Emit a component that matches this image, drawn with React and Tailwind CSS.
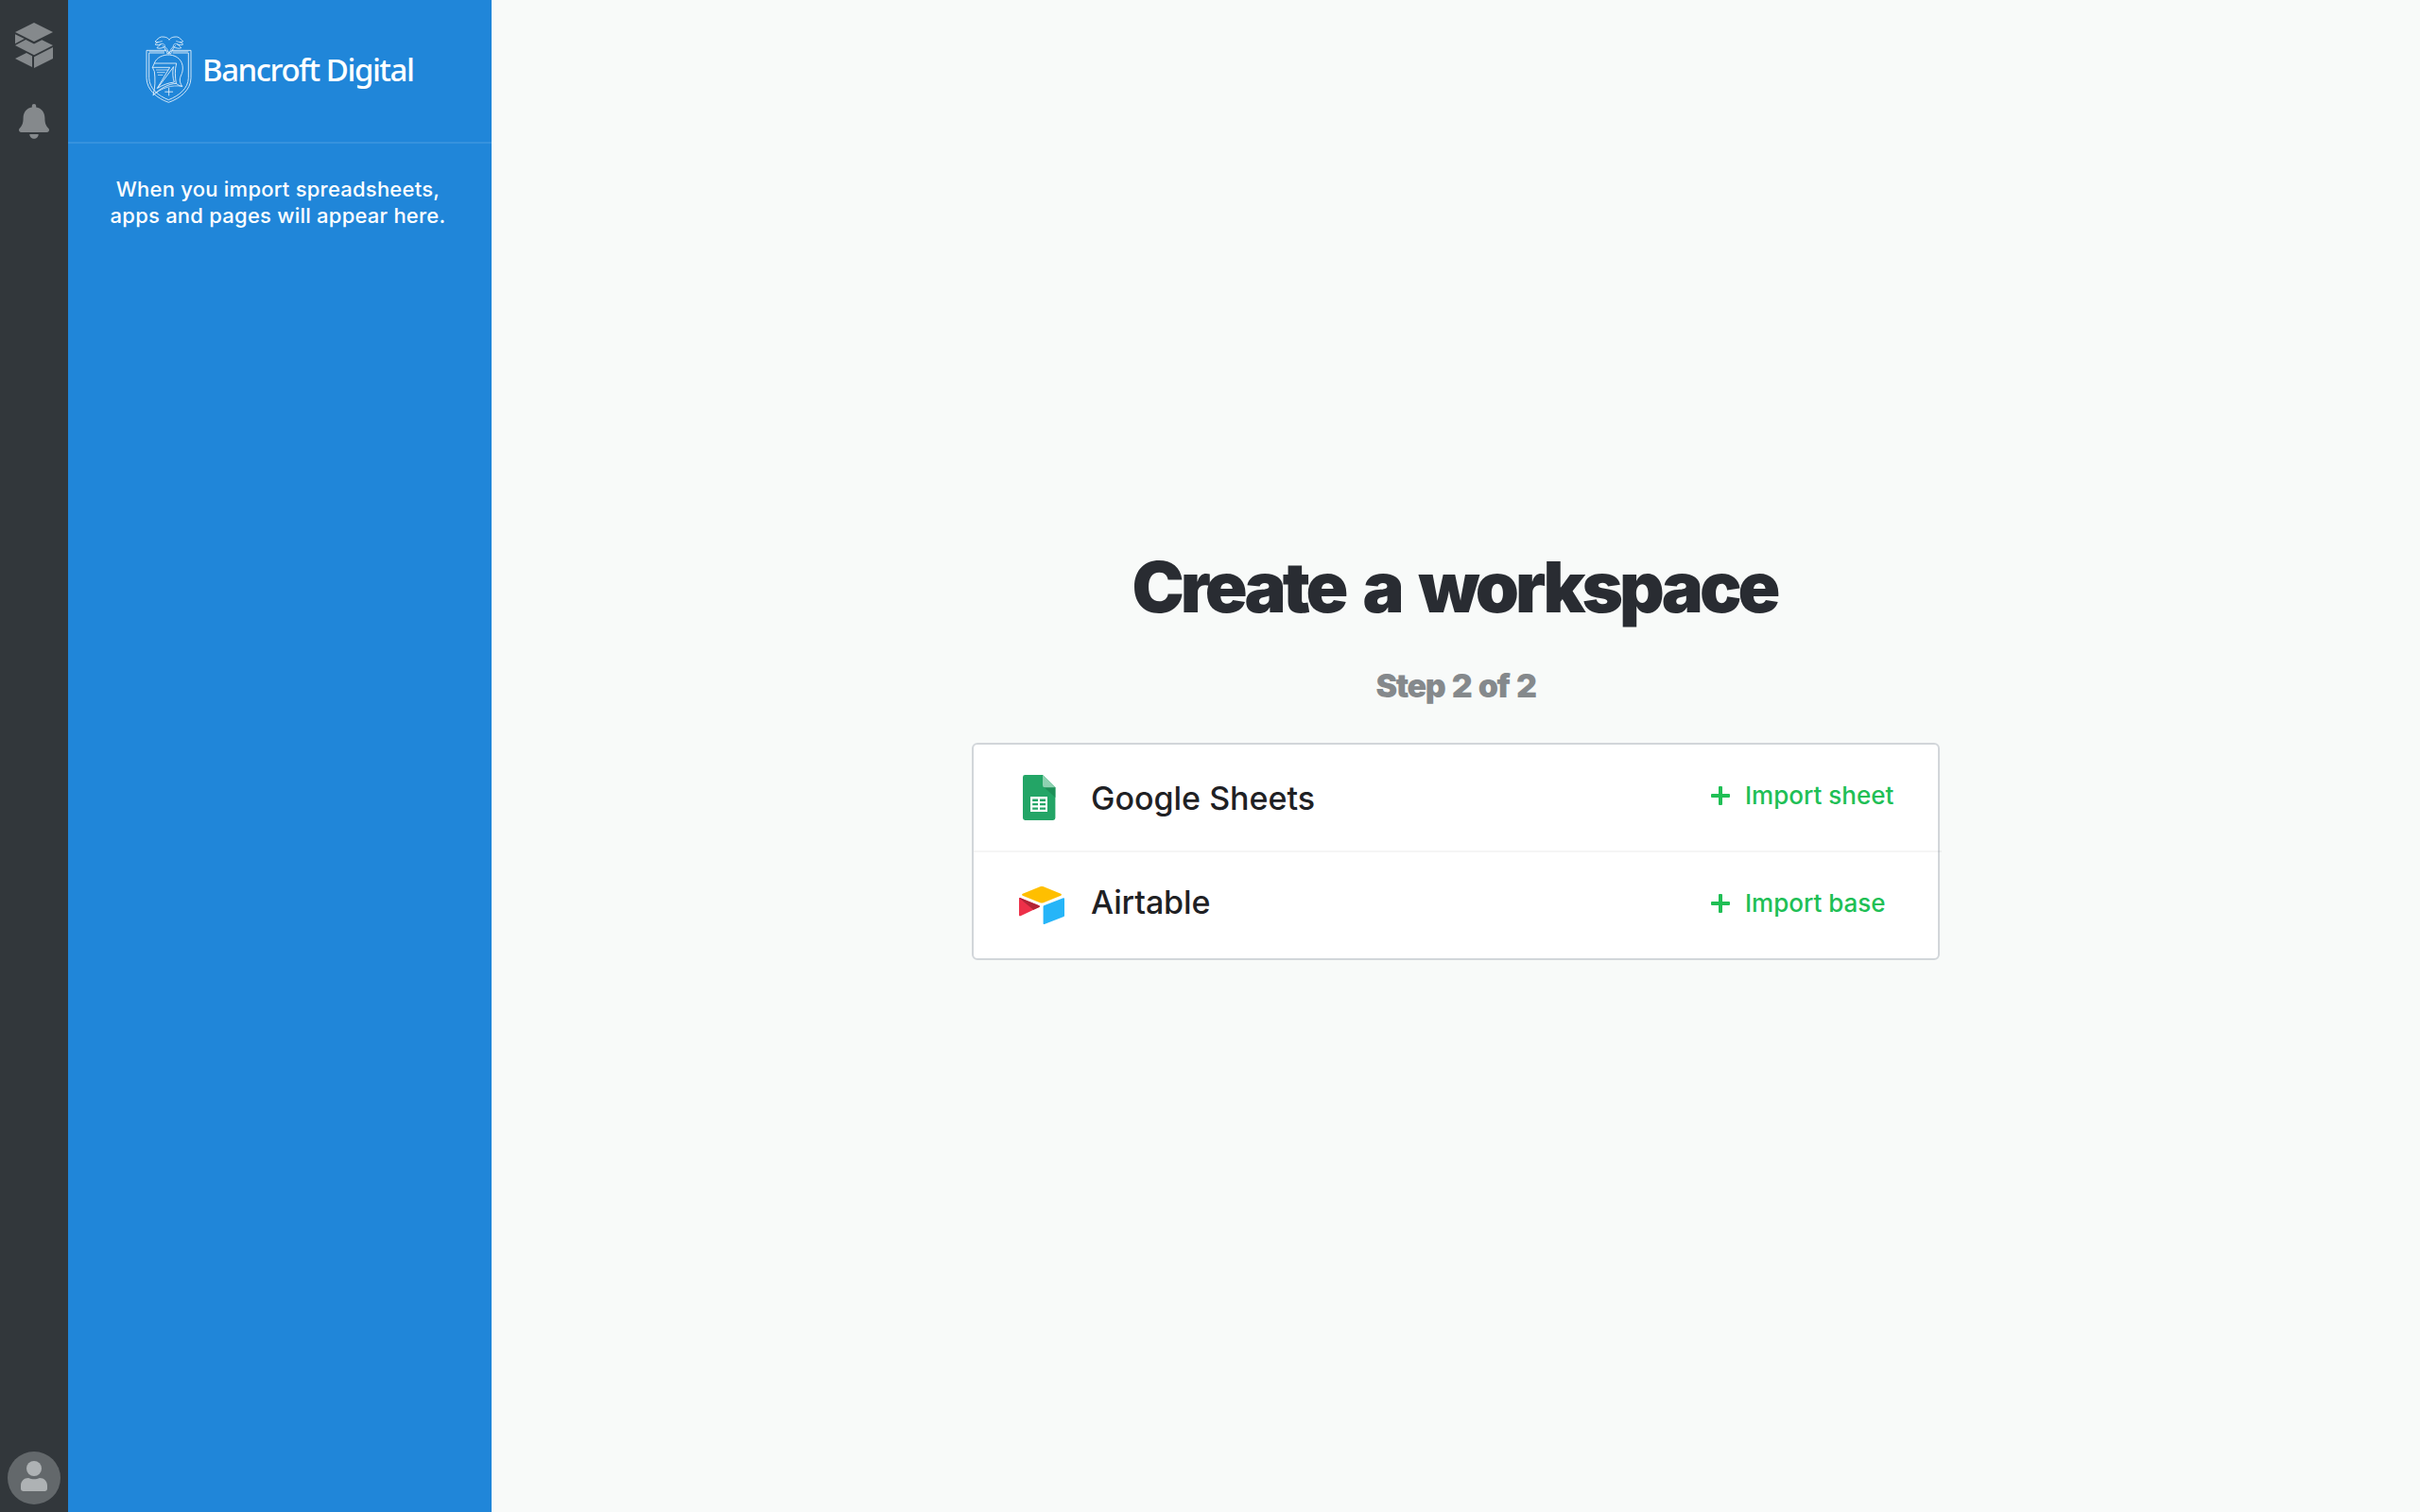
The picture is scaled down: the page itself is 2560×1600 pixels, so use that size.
import React from "react";

function StackIcon() {
  return (
    <svg className="block h-12 w-10" viewBox="0 0 40 48" fill="#85898c">
      <path d="M20 0 40 10 20 20 0 10Z" />
      <path d="M0 12.2 9.8 17 0 22.2Z" />
      <path d="M0 24 11.2 18 20 22.4 28.4 18.2 40 24 20 34.2Z" />
      <path d="M0 38 12 32 18 35.2V47Z" />
      <path d="M20 36.2 40 26V38L20 48Z" />
    </svg>
  );
}

function BellIcon() {
  return (
    <svg className="block h-[37px] w-8" viewBox="0 0 32 37" fill="#85898c">
      <path d="M16 0c1.3 0 2.2.9 2.2 2.2v1.3C24 4.500 27.400 9 27.400 14.800c0 6 1.300 8.200 3.800 10.900.5.500.8 1.100.8 1.900 0 1.300-1 2.400-2.400 2.400H2.400C1 30 0 28.900 0 27.600c0-.8.3-1.400.8-1.900 2.500-2.700 3.800-4.900 3.800-10.900C4.600 9 8 4.500 13.800 3.500V2.200C13.800.9 14.700 0 16 0Z" />
      <path d="M11.300 32h9.400c0 2.800-2.100 4.800-4.700 4.800s-4.700-2-4.700-4.800Z" />
    </svg>
  );
}

function Avatar() {
  return (
    <svg className="block size-14" viewBox="0 0 56 56">
      <circle cx="28" cy="28" r="28" fill="#63686b" />
      <circle cx="28" cy="18" r="8" fill="#aeb2b4" />
      <path d="M22 28c2 .9 4 1.200 6 1.200s4-.3 6-1.200c4.500 0 8 3.500 8 8v3.600a2.400 2.400 0 0 1-2.400 2.400H16.400a2.400 2.400 0 0 1-2.400-2.400V36c0-4.500 3.500-8 8-8Z" fill="#aeb2b4" />
    </svg>
  );
}

function Crest() {
  return (
    <svg className="block h-[71px] w-[49px]" viewBox="42 40 147 213" fill="none" stroke="#fff" strokeWidth="2.700" strokeLinejoin="round" strokeLinecap="round" opacity=".88">
      <path d="M104 86H45V174C46 212 78 238 115 251C152 238 185 212 186 174V86H126" />
      <path d="M101 94H53V174C54 207 82 230 115 243C148 230 177 207 178 174V94H129" />
      <path d="M54 90H101M129 90H177" strokeWidth="1.800" />
      <path d="M117 52C111 43 101 43 92 43C83 45 79 52 72 58C77 60 79 60 82 60C76 62 74 65 72 67C80 70 86 68 91 66C85 70 81 74 78 78C86 82 94 78 100 76M117 52C123 43 133 43 142 43C151 45 155 52 161 58C156 60 154 60 151 60C157 62 160 65 161 67C153 70 147 68 142 66C148 70 152 74 155 78C147 82 139 78 133 76" strokeWidth="2.600" />
      <path d="M82 60L94 57M151 60L140 57M91 66C98 62 104 67 103 74M142 66C135 62 129 67 130 74M96 71L101 76L111 96M137 71L132 76L122 96M103 74C110 78 112 86 117 97M130 74C123 78 121 86 116 97M104 84L122 97M129 84L111 97" strokeWidth="2.200" />
      <path d="M70 126C76 109 97 99 118 100C143 102 160 119 160 142C160 160 152 166 151 178C150 187 154 193 158 200C149 198 143 195 139 191" />
      <path d="M64 140L70 127H140C134 148 136 171 139 191C115 192 88 207 66 228C73 203 73 178 70 153L64 140H119L79 206" />
      <path d="M76 148H113M79 156H103M82 164H96" strokeWidth="2.200" />
      <path d="M130 139L80 206C97 195 115 189 133 187C128 173 127 156 130 139Z" />
      <path d="M66 228C91 206 124 194 158 200" strokeWidth="2.200" />
      <path d="M104 217.500H128M116 206V229" />
    </svg>
  );
}

function SheetsIcon() {
  return (
    <svg className="ml-1 block h-12 w-[35px]" viewBox="0 0 35 48">
      <path d="M2.400 0H21L34.400 13.200V45.600A2.400 2.400 0 0 1 32 48H2.400A2.400 2.400 0 0 1 0 45.600V2.400A2.400 2.400 0 0 1 2.400 0Z" fill="#23a566" />
      <path d="M22 12.400 34.400 24V13Z" fill="#1c8f57" />
      <path d="M21 0 34.400 13.200H23.200A2.200 2.200 0 0 1 21 11Z" fill="#8ed1b1" />
      <path d="M8 23H26V39H8ZM10.200 25.500V28H16V25.500ZM18 25.500V28H24V25.500ZM10.200 30V32.300H16V30ZM18 30V32.300H24V30ZM10.200 34.400V36.800H16V34.400ZM18 34.400V36.800H24V34.400Z" fill="#fff" fillRule="evenodd" />
    </svg>
  );
}

function AirtableIcon() {
  return (
    <svg className="block h-10 w-12" viewBox="0 0 48 40">
      <path d="M22.300.3a4.800 4.800 0 0 1 3.600 0L44.200 7.800c1 .4 1 1.600 0 2L25.800 17.200a4.800 4.800 0 0 1-3.600 0L3.800 9.800c-1-.4-1-1.600 0-2Z" fill="#ffbf00" />
      <path d="M25.600 21.300V39.200c0 .7.500 1 1.200.8L47.300 32.100c.5-.2.700-.5.700-1V13.100c0-.8-.5-1.100-1.200-.8L26.300 20.300c-.5.200-.7.500-.7 1Z" fill="#26b5f8" />
      <path d="M21.200 22.100 1.600 31.300C.8 31.700 0 31.300 0 30.600V13.200C0 12.200.8 11.900 1.500 12.200L21.200 20.200c.9.400.9 1.500 0 1.900Z" fill="#ed3049" />
      <path d="M.4 12.400C.7 12.100 1.100 12 1.500 12.200L21.200 20.200c.9.400.9 1.500 0 1.900L15.300 24.800Z" fill="#b22437" />
    </svg>
  );
}

function PlusIcon() {
  return (
    <svg className="block size-5" viewBox="0 0 20 20" fill="#20bf55">
      <path d="M9 0h2a1 1 0 0 1 1 1v7h7a1 1 0 0 1 1 1v2a1 1 0 0 1-1 1h-7v7a1 1 0 0 1-1 1H9a1 1 0 0 1-1-1v-7H1a1 1 0 0 1-1-1V9a1 1 0 0 1 1-1h7V1a1 1 0 0 1 1-1Z" />
    </svg>
  );
}

function ImportButton({ label }) {
  return (
    <button className="ml-auto flex w-60 items-center pb-1.5 text-[26px] leading-8 font-medium text-[#20bf55]">
      <span className="pt-0.5"><PlusIcon /></span>
      <span className="ml-4 pt-px whitespace-nowrap">{label}</span>
    </button>
  );
}

export default function App() {
  return (
    <div className="flex h-[1600px] w-[2560px] overflow-hidden bg-[#f8faf9] font-['Inter',sans-serif]">
      <nav className="flex w-[72px] flex-col items-center bg-[#32373b] pt-6 pb-2">
        <StackIcon />
        <div className="mt-[38px]"><BellIcon /></div>
        <div className="mt-auto"><Avatar /></div>
      </nav>

      <aside className="w-[448px] bg-[#2086d9] text-white">
        <header className="flex h-[152px] items-start border-b-2 border-[#3692dd] pt-[38px] pl-[82px]">
          <Crest />
          <span className="ml-[11px] pt-3 font-['Noto_Sans',sans-serif] text-[33px] leading-[48px] font-medium tracking-[-1.450px] whitespace-nowrap">Bancroft Digital</span>
        </header>
        <p className="mt-[34px] pr-1 text-center text-[22px] leading-[28px] font-medium tracking-[0.23px]">
          When you import spreadsheets,
          <br />
          apps and pages will appear here.
        </p>
      </aside>

      <main className="flex flex-1 flex-col items-center pt-[577px]">
        <h1 className="pr-[3px] text-[74px] leading-[89px] font-black tracking-[-3.900px] [word-spacing:8px] text-[#292c32]">Create a workspace</h1>
        <h2 className="mt-10 text-[34px] leading-10 font-black tracking-[-1.400px] [word-spacing:2px] text-[#85898c]">Step 2 of 2</h2>
        <section className="mt-10 h-[230px] w-[1024px] rounded-md border-2 border-[#d2d6da] bg-white">
          <div className="flex h-28 items-center pl-12">
            <div className="w-12"><SheetsIcon /></div>
            <span className="ml-7 text-[34px] font-medium text-[#1f2124]">Google Sheets</span>
            <ImportButton label="Import sheet" />
          </div>
          <div className="-mr-1 h-0.5 bg-[#32373b]/5" />
          <div className="flex h-28 items-center pl-12">
            <div className="w-12"><AirtableIcon /></div>
            <span className="ml-7 pb-2 text-[34px] font-medium tracking-[-0.100px] text-[#1f2124]">Airtable</span>
            <ImportButton label="Import base" />
          </div>
        </section>
      </main>
    </div>
  );
}
